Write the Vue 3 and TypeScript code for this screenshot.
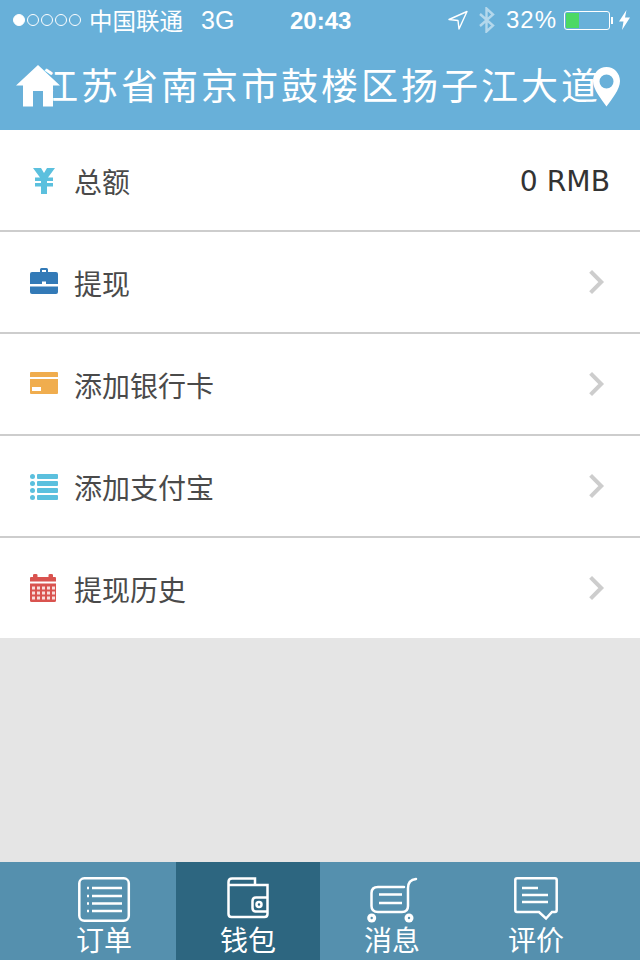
<script setup lang="ts">
const rows = [
  { key: "total", label: "总额", value: "0 RMB" },
  { key: "withdraw", label: "提现" },
  { key: "card", label: "添加银行卡" },
  { key: "alipay", label: "添加支付宝" },
  { key: "history", label: "提现历史" }
];

const tabs = [
  { key: "orders", label: "订单" },
  { key: "wallet", label: "钱包" },
  { key: "messages", label: "消息" },
  { key: "reviews", label: "评价" }
];

const activeTab = "wallet";
const calendarCols = [3, 8, 13, 18, 23];
const calendarRows = [15, 20, 25];
</script>

<template>
  <div class="page">
    <header class="top">
      <div class="status">
        <div class="status-left">
          <span class="signal">
            <i class="dot dot--on" />
            <i v-for="n in 4" :key="n" class="dot" />
          </span>
          <span class="carrier">中国联通</span>
          <span class="net">3G</span>
        </div>
        <span class="clock">20:43</span>
        <div class="status-right">
          <svg class="loc" width="20" height="20" viewBox="0 0 20 20">
            <path d="M1 9.500 19 1.500 11 19 10 10.500Z" fill="none" stroke="#fff" stroke-width="1.400" stroke-linejoin="round" />
          </svg>
          <svg class="bt" width="16" height="26" viewBox="0 0 16 26">
            <path d="M1 7 14 18.500 7.500 24.500V1.500L14 7.500 1 19" fill="none" stroke="#fff" stroke-opacity=".5" stroke-width="2.400" />
          </svg>
          <span class="pct">32%</span>
          <span class="battery"><i class="battery-fill" /></span>
          <svg class="bolt" width="11" height="20" viewBox="0 0 11 20">
            <path d="M7.500 0 0 11.500H4.500L3 20 11 7.500H6Z" fill="#fff" />
          </svg>
        </div>
      </div>
      <div class="nav">
        <h1 class="title">江苏省南京市鼓楼区扬子江大道</h1>
        <svg class="home" width="44" height="42" viewBox="0 0 44 42">
          <path d="M22 0 44 20.500H37V41.500H27V26H17V41.500H7V20.500H0Z" fill="#fff" />
        </svg>
        <svg class="pin" width="27" height="40" viewBox="0 0 27 40">
          <path fill-rule="evenodd" d="M13.500 0C6 0 0 6.200 0 14 0 22.500 8.500 32.500 13.500 39.500 18.500 32.500 27 22.500 27 14 27 6.200 21 0 13.500 0ZM13.500 7.500A7 7 0 1 1 13.500 21.500 7 7 0 1 1 13.500 7.500Z" fill="#fff" />
        </svg>
      </div>
    </header>

    <ul class="list">
      <li v-for="row in rows" :key="row.key" class="row">
        <span class="row-icon">
          <svg v-if="row.key === 'total'" width="28" height="28" viewBox="0 0 28 28">
            <path d="M3 2H11L14 7 17 2H25L18 11.500H23V15H17V17H23V20.500H17V28H11V20.500H5V17H11V15H5V11.500H10Z" fill="#5bc0de" />
          </svg>
          <svg v-else-if="row.key === 'withdraw'" width="28" height="28" viewBox="0 0 28 28">
            <path d="M10 4V1.500Q10 0 11.500 0H16.500Q18 0 18 1.500V4H16V2H12V4Z" fill="#337ab7" />
            <path d="M0 6Q0 4 2 4H26Q28 4 28 6V16H16V13.500H12V16H0Z" fill="#337ab7" />
            <path d="M0 18.500H28V24Q28 26 26 26H2Q0 26 0 24Z" fill="#337ab7" />
          </svg>
          <svg v-else-if="row.key === 'card'" width="28" height="28" viewBox="0 0 28 28">
            <path d="M0 3Q0 2 1 2H27Q28 2 28 3V7H0Z" fill="#f0ad4e" />
            <path d="M0 9H28V23Q28 24 27 24H1Q0 24 0 23ZM2 17V21H11V17Z" fill="#f0ad4e" fill-rule="evenodd" />
          </svg>
          <svg v-else-if="row.key === 'alipay'" width="28" height="28" viewBox="0 0 28 28">
            <g fill="#5bc0de">
              <circle v-for="y in [4.500, 11.500, 18.500, 25.500]" :key="y" cx="2.500" :cy="y" r="2.500" />
              <rect v-for="y in [2, 9, 16, 23]" :key="y" x="7" :y="y" width="21" height="5" rx="1" />
            </g>
          </svg>
          <svg v-else width="28" height="30" viewBox="0 0 28 30">
            <path d="M0 5Q0 4 1 4H3V2Q3 1 4.500 1H6Q7.500 1 7.500 2V4H18.500V2Q18.500 1 20 1H21.500Q23 1 23 2V4H25Q26 4 26 5V8.500H0Z" fill="#d9534f" />
            <path d="M0 10.500H26V27.500Q26 29 24.500 29H1.500Q0 29 0 27.500Z" fill="#d9534f" />
            <g fill="#f8dcda">
              <template v-for="y in calendarRows" :key="y">
                <rect v-for="x in calendarCols" :key="x" :x="x - 1" :y="y - 1.500" width="3" height="3" />
              </template>
            </g>
          </svg>
        </span>
        <span class="row-label">{{ row.label }}</span>
        <span v-if="row.value" class="row-value">{{ row.value }}</span>
        <svg v-else class="chevron" width="18" height="28" viewBox="0 0 18 28">
          <path d="M2.600 3.400 13.200 14 2.600 24.600" fill="none" stroke="#cdcdcd" stroke-width="4" />
        </svg>
      </li>
    </ul>

    <div class="filler" />

    <nav class="tabs">
      <div
        v-for="tab in tabs"
        :key="tab.key"
        class="tab"
        :class="{ 'tab--active': tab.key === activeTab }"
      >
        <svg class="tab-icon" width="56" height="48" viewBox="0 0 56 48" fill="none" stroke="#fff" stroke-width="2.500">
          <template v-if="tab.key === 'orders'">
            <rect x="3.300" y="2.300" width="49.500" height="42.500" rx="5" />
            <path d="M16 12H46M16 20H46M16 27.500H46M16 35H46" />
            <path d="M11 12H13M11 20H13M11 27.500H13M11 35H13" />
          </template>
          <template v-else-if="tab.key === 'wallet'">
            <path d="M8.500 9V6Q8.500 2.500 12 2.500H35V9M8.500 9V38Q8.500 41 11.500 41H44.500Q47.500 41 47.500 38V9H8.500Z" />
            <path d="M47.500 21.500H36Q32.500 21.500 32.500 25V32Q32.500 35.500 36 35.500H47.500" />
            <circle cx="39" cy="28.500" r="2.500" />
          </template>
          <template v-else-if="tab.key === 'messages'">
            <path d="M40 11H14Q7.500 11 7.500 17V30Q7.500 36 14 36H38Q44 36 44 30V12Q44 4 52 3" stroke-linecap="round" />
            <path d="M15 18.500H38M15 27H38" />
            <circle cx="7.700" cy="42" r="4.500" fill="#fff" stroke="none" />
            <circle cx="45" cy="42" r="4.500" fill="#fff" stroke="none" />
            <circle cx="7.700" cy="42" r="1.200" fill="#5590ae" stroke="none" />
            <circle cx="45" cy="42" r="1.200" fill="#5590ae" stroke="none" />
          </template>
          <template v-else>
            <path d="M9 2.300H47Q48.700 2.300 48.700 4V34Q48.700 36 47 36H44L38 42.500 31 36H9Q7.300 36 7.300 34V4Q7.300 2.300 9 2.300Z" />
            <path d="M14 12H30M14 19H40M14 26H40" />
          </template>
        </svg>
        <span class="tab-label">{{ tab.label }}</span>
      </div>
    </nav>
  </div>
</template>

<style>
html,
body {
  margin: 0;
  background: #e5e5e5;
}
</style>

<style scoped>
.page {
  width: 640px;
  height: 960px;
  display: flex;
  flex-direction: column;
  overflow: hidden;
  font-family: "Liberation Sans", "Noto Sans CJK SC", sans-serif;
}

.top {
  background: #68b0d9;
  color: #fff;
}

.status {
  height: 40px;
  position: relative;
  display: flex;
  align-items: center;
  justify-content: space-between;
  padding: 0 10px 0 13px;
}

.status-left,
.status-right {
  display: flex;
  align-items: center;
}

.signal {
  display: flex;
  gap: 2px;
  margin-right: 8px;
}

.dot {
  width: 12px;
  height: 12px;
  box-sizing: border-box;
  border: 1px solid #fff;
  border-radius: 50%;
}

.dot--on {
  background: #fff;
}

.carrier {
  font-size: 23.500px;
  margin-right: 18px;
}

.net {
  font-size: 25px;
}

.clock {
  position: absolute;
  left: 290px;
  top: 7px;
  font-size: 24px;
  font-weight: 700;
}

.bt {
  margin: 0 11px 0 11px;
}

.pct {
  font-size: 24px;
  letter-spacing: 1px;
  margin-right: 7px;
}

.battery {
  position: relative;
  width: 46px;
  height: 19px;
  box-sizing: border-box;
  border: 1px solid #fff;
  border-radius: 3px;
  padding: 1px;
  margin-right: 9px;
}

.battery::after {
  content: "";
  position: absolute;
  right: -4px;
  top: 5px;
  width: 2px;
  height: 7px;
  background: #fff;
}

.battery-fill {
  display: block;
  width: 13px;
  height: 100%;
  background: #4cd964;
}

.nav {
  height: 90px;
  position: relative;
  display: flex;
  align-items: center;
  justify-content: center;
  padding-left: 2px;
}

.title {
  margin: 0 0 3px;
  font-size: 37px;
  font-weight: 400;
  letter-spacing: 3px;
  white-space: nowrap;
}

.home {
  position: absolute;
  left: 16px;
  top: 25px;
}

.pin {
  position: absolute;
  left: 593px;
  top: 27px;
}

.list {
  margin: 0;
  padding: 0;
  list-style: none;
  background: #fff;
}

.row {
  height: 100px;
  display: flex;
  align-items: center;
  padding: 0 30px;
  border-bottom: 2px solid #cdcdcd;
}

.row:last-child {
  border-bottom: 0;
}

.row-icon {
  width: 44px;
  display: flex;
}

.row-label {
  flex: 1;
  padding-top: 2px;
  font-size: 28px;
  color: #4a4a4a;
}

.row-value {
  padding-top: 3px;
  font-family: "DejaVu Sans", sans-serif;
  font-size: 28.200px;
  color: #333;
}

.chevron {
  margin-right: 4px;
}

.filler {
  flex: 1;
  background: #e5e5e5;
}

.tabs {
  height: 98px;
  display: flex;
  padding: 0 32px;
  background: #5590ae;
}

.tab {
  width: 144px;
  display: flex;
  flex-direction: column;
  align-items: center;
  padding-top: 14px;
  box-sizing: border-box;
  color: #fff;
}

.tab--active {
  background: #2d6680;
}

.tab-label {
  font-size: 28px;
  line-height: 36px;
}
</style>
